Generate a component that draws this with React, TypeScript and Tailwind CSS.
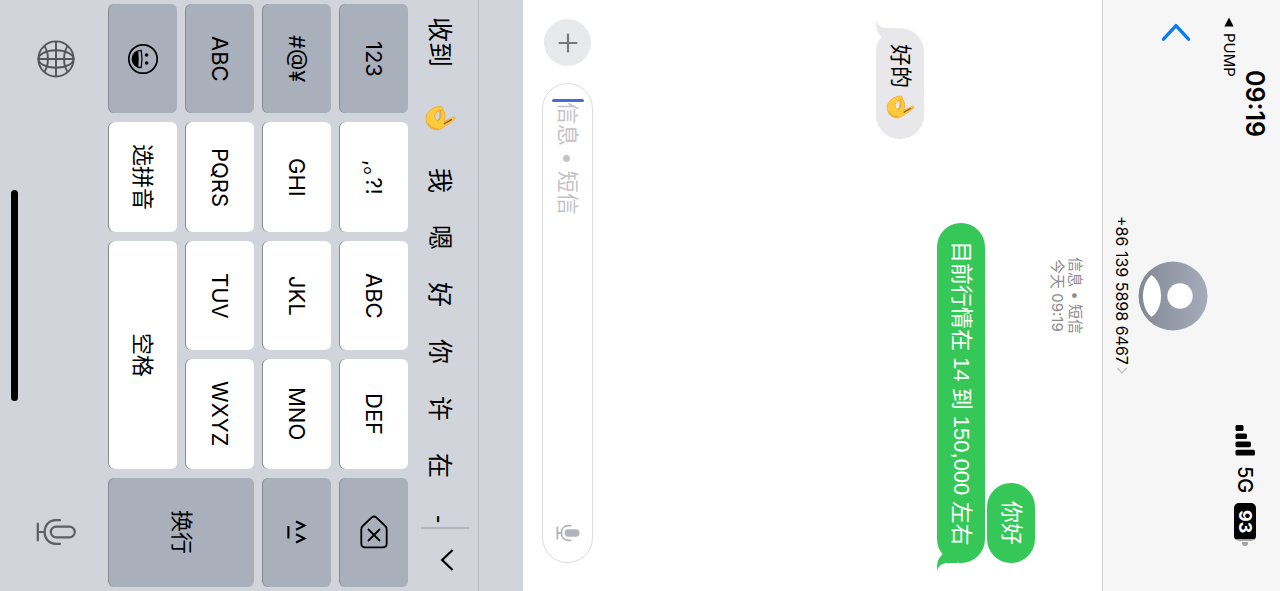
import type { ReactNode } from "react";

const latin = "font-['Inter','Noto_Sans_CJK_SC',sans-serif]";
const cjk = "font-['Liberation_Sans','Noto_Sans_CJK_SC',sans-serif]";

function OkHand({ className }: { className: string }) {
  return (
    <svg viewBox="0 0 31 26" className={className} role="img" aria-label="👌">
      <path
        fillRule="evenodd"
        fill="#ffcb3d"
        stroke="#e8a02c"
        strokeWidth="0.7"
        d="M15.6 1.2 C17.4 1.4 18 3 17.8 4.6 C19.8 7 20.4 10 19.8 13 L19.2 16.6 L28.2 12.2 C30.4 11.6 30.8 13.6 29 14.8 L23.4 19 L16.6 23.4 C14 25.6 9.6 25.2 6.4 23.4 C2.4 20.8 0.6 16.4 1.2 12.2 C2 6.6 8 1.4 15.6 1.2 Z M14.2 5.4 C11 7 9.4 9.6 9.8 12.4 C10.2 14.6 11.6 15.6 12.8 15.4 C14.8 13.4 15.6 9.4 14.2 5.4 Z"
      />
      <path d="M15 4.6 C16.8 8.6 16 13.4 13 16.4 M17.6 4.6 C16.8 5.4 16 5.4 15.2 5" fill="none" stroke="#e39a26" strokeWidth="0.9" />
      <path d="M19.4 18.6 L26.4 14.6" fill="none" stroke="#9a5d16" strokeWidth="1.5" strokeLinecap="round" />
      <path d="M3 18 C5 22 9 24 13.4 23.4" fill="none" stroke="#f0a830" strokeWidth="1.2" />
    </svg>
  );
}

function Avatar() {
  return (
    <svg viewBox="0 0 70 70" className="h-[70px] w-[70px]" aria-hidden="true">
      <defs>
        <linearGradient id="avatar" x1="0" y1="0" x2="1" y2="0">
          <stop offset="0" stopColor="#848995" />
          <stop offset="1" stopColor="#a5abba" />
        </linearGradient>
      </defs>
      <circle cx="35" cy="35" r="34.5" fill="url(#avatar)" />
      <circle cx="42" cy="35" r="12.7" fill="#fff" />
      <path d="M13.5 14 C19 18 23 25 23 35 C23 45 19 52 13.5 56 C8 51 5 44 5 35 C5 26 8 19 13.5 14 Z" fill="#fff" />
    </svg>
  );
}

function StatusBar() {
  return (
    <div className="flex w-16 justify-between">
      <div className="flex flex-col ps-[17px] [padding-block-start:12px]">
        <time className="w-[26px] ps-[53px] text-[25px] leading-[26px] font-semibold">09:19</time>
        <a href="#pump" className="flex w-[26px] items-center gap-1.5 text-[15px] leading-[26px]">
          <svg viewBox="0 0 10 10" className="h-2.5 w-2.5" aria-hidden="true">
            <path d="M5 0.5 L9.6 9.5 L0.4 9.5 Z" />
          </svg>
          PUMP
        </a>
      </div>
      <div className="flex w-[22px] items-center gap-[10px] pe-[45px] text-[20px] leading-[22px] font-medium [margin-block-start:24px]">
        <svg viewBox="0 0 20 31" className="h-[31px] w-5" role="img" aria-label="Signal">
          <rect x="0.5" y="0" width="8" height="6" rx="1.6" />
          <rect x="0.5" y="8.4" width="11.5" height="5.6" rx="1.6" />
          <rect x="0.5" y="16.6" width="15.5" height="5.6" rx="1.6" />
          <rect x="0.5" y="24.8" width="19.5" height="5.8" rx="1.6" />
        </svg>
        <span>5G</span>
        <span className="flex items-center">
          <span className="flex h-[38px] w-[22px] items-center justify-center rounded-[5px] bg-linear-to-b from-black from-95% to-[#a3a3a3] to-95% text-[18px] font-bold text-white">
            93
          </span>
          <span className="mt-px h-1 w-1.5 rounded-b-full bg-[#a3a3a3]" />
        </span>
      </div>
    </div>
  );
}

function Header() {
  return (
    <header className={`flex w-[178px] shrink-0 flex-col border-l border-[#cfcfd1] bg-[#f6f6f6] text-black ${latin}`}>
      <StatusBar />
      <nav className="grid flex-1 grid-cols-3">
        <button type="button" aria-label="Back" className="flex w-8 justify-start ps-[22px] [margin-block-start:24px]">
          <svg viewBox="0 0 32 20" className="h-5 w-8" aria-hidden="true">
            <path d="M3.5 17.2 L16 3.6 L28.5 17.2" fill="none" stroke="#0b7cf5" strokeWidth="3.4" strokeLinecap="round" strokeLinejoin="round" />
          </svg>
        </button>
        <a href="#contact" className="flex flex-col items-center gap-1.5 [padding-block-start:8px]">
          <Avatar />
          <span className="flex items-center gap-0.5 text-[16px] leading-[20px] whitespace-nowrap">
            +86 139 5898 6467
            <svg viewBox="0 0 12 8" className="h-2 w-3" aria-hidden="true">
              <path d="M1.5 1.2 L6 6 L10.5 1.2" fill="none" stroke="#c2c2c5" strokeWidth="1.4" strokeLinecap="round" />
            </svg>
          </span>
        </a>
      </nav>
    </header>
  );
}

function SentBubble({ children, tail }: { children: ReactNode; tail?: boolean }) {
  return (
    <div className="relative me-7 flex w-12 items-center self-end rounded-full bg-[#36c759] px-[18px] text-[22px] leading-[28px] whitespace-nowrap text-white">
      {children}
      {tail && (
        <svg viewBox="0 0 20 24" className="absolute -bottom-2 left-0 h-6 w-5" aria-hidden="true">
          <path d="M20 16 H11 C6 16 1.5 18 0.3 24 C-0.5 16 1 11 6 7 L14 1 H20 Z" fill="#36c759" />
        </svg>
      )}
    </div>
  );
}

function Conversation() {
  return (
    <section className={`flex flex-1 flex-col ${cjk}`} aria-label="Messages">
      <div className={`self-center text-center text-[15px] leading-[18px] text-[#8a8a8e] [padding-block:18px_13px] ${latin}`}>
        <p>信息 • 短信</p>
        <p>今天 09:19</p>
      </div>
      <div className="flex flex-col gap-0.5">
        <SentBubble>你好</SentBubble>
        <SentBubble tail>目前行情在 14 到 150,000 左右</SentBubble>
      </div>
      <div className="relative ms-7 flex w-12 items-center gap-[7px] self-start rounded-full bg-[#e8e8ea] ps-4 pe-5 text-[22px] leading-[28px] text-black [margin-block-start:13px]">
        好的
        <OkHand className="h-6 w-[29px]" />
        <svg viewBox="0 0 20 24" className="absolute -top-2 left-0 h-6 w-5" aria-hidden="true">
          <path d="M20 8 H11 C6 8 1.5 6 0.3 0 C-0.5 8 1 13 6 17 H12 L20 10 Z" fill="#e8e8ea" />
        </svg>
      </div>
    </section>
  );
}

function Composer() {
  return (
    <form className={`flex w-[80px] shrink-0 items-center gap-[17px] pe-7 ps-[19px] [padding-block-start:10px] [padding-block-end:19px] ${latin}`}>
      <button type="button" aria-label="Add" className="flex h-[47px] w-[47px] shrink-0 items-center justify-center rounded-full bg-[#e8e9eb]">
        <svg viewBox="0 0 20 20" className="h-5 w-5" aria-hidden="true">
          <path d="M10 1.5 V18.5 M1.5 10 H18.5" stroke="#77787c" strokeWidth="2.2" strokeLinecap="round" />
        </svg>
      </button>
      <div className="flex min-h-0 w-[51px] flex-1 items-center rounded-full border border-[#dcdcde] pe-5 ps-[15px]">
        <span className="h-[3px] w-8 rounded-full bg-[#4a6ad6]" />
        <input
          type="text"
          aria-label="Message"
          placeholder="信息 • 短信"
          className="min-h-0 w-8 flex-1 text-[22px] leading-[32px] outline-none placeholder:text-[#c3c3c6]"
        />
        <button type="button" aria-label="Dictate">
          <svg viewBox="0 0 24 18" className="h-[18px] w-6" aria-hidden="true">
            <rect x="8.5" y="5.3" width="15" height="7.4" rx="3.7" fill="#b1b4bb" />
            <path d="M1.4 3.5 V14.5 M1.4 9 H5.4 M14.6 1.7 H12.5 C8 1.7 5.4 5 5.4 9 C5.4 13 8 16.3 12.5 16.3 H14.6" fill="none" stroke="#b1b4bb" strokeWidth="1.8" strokeLinecap="round" />
          </svg>
        </button>
      </div>
    </form>
  );
}

function Candidates() {
  return (
    <div className={`flex w-[70px] text-[25px] leading-[30px] ${cjk}`}>
      <div className="flex min-h-0 flex-1 items-center overflow-hidden [padding-block-start:6px]">
        <button type="button" className="h-[84px] w-8 shrink-0">收到</button>
        <button type="button" className="flex h-[68px] w-8 shrink-0 items-center justify-center">
          <OkHand className="h-[26px] w-[31px]" />
        </button>
        {["我", "嗯", "好", "你", "许", "在"].map((word) => (
          <button type="button" key={word} className="h-[57px] w-8 shrink-0">
            {word}
          </button>
        ))}
        <button type="button" className="w-8 shrink-0 ps-[21px]">-</button>
      </div>
      <button
        type="button"
        aria-label="More candidates"
        className="flex h-16 w-12 items-center justify-center self-start border-t-2 border-[#b4b6bb] [margin-block-start:9px] [padding-block-end:3px]"
      >
        <svg viewBox="0 0 14 24" className="h-6 w-3.5" aria-hidden="true">
          <path d="M12.6 2 L2.2 12 L12.6 22" fill="none" stroke="#000" strokeWidth="2.2" />
        </svg>
      </button>
    </div>
  );
}

function Key({ children, dark, label, className = "" }: { children: ReactNode; dark?: boolean; label?: string; className?: string }) {
  return (
    <button
      type="button"
      aria-label={label}
      className={`flex min-h-0 min-w-0 items-center justify-center rounded-md shadow-[-1px_0_0_#898b90] ${dark ? "bg-[#a9afbb]" : "bg-white"} ${className}`}
    >
      {children}
    </button>
  );
}

function Keypad() {
  return (
    <div className={`grid w-[299px] grid-cols-5 grid-rows-4 gap-[9px] ps-1 pe-1 text-[22px] leading-[28px] ${latin}`}>
      <Key dark>123</Key>
      <Key className="[font-feature-settings:'halt']">,。?!</Key>
      <Key>ABC</Key>
      <Key>DEF</Key>
      <Key dark label="Delete">
        <svg viewBox="0 0 28 34" className="h-[34px] w-7" aria-hidden="true">
          <path d="M11.5 2.6 Q14 0.4 16.5 2.6 L25.3 11 Q26.7 12.4 26.7 14.4 V28.5 Q26.7 32.4 22.8 32.4 H5.2 Q1.3 32.4 1.3 28.5 V14.4 Q1.3 12.4 2.7 11 Z M8 14 L20 26 M20 14 L8 26" fill="none" stroke="#000" strokeWidth="1.8" />
        </svg>
      </Key>
      <Key dark>#@¥</Key>
      <Key>GHI</Key>
      <Key>JKL</Key>
      <Key>MNO</Key>
      <Key dark label="Emoticons">
        <svg viewBox="0 0 20 24" className="h-6 w-5" aria-hidden="true">
          <path d="M9 1.5 L17.5 5.6 L9 9.7 M9 14.3 L17.5 18.4 L9 22.5 M1.4 6 V18.5" fill="none" stroke="#000" strokeWidth="2.1" />
        </svg>
      </Key>
      <Key dark>ABC</Key>
      <Key>PQRS</Key>
      <Key>TUV</Key>
      <Key>WXYZ</Key>
      <Key dark className="row-span-2">换行</Key>
      <Key dark label="Emoji">
        <svg viewBox="0 0 32 32" className="h-8 w-8" aria-hidden="true">
          <circle cx="16" cy="16" r="14.2" fill="none" stroke="#000" strokeWidth="1.7" />
          <circle cx="19.6" cy="12" r="1.8" />
          <circle cx="19.6" cy="20" r="1.8" />
          <path d="M14.2 7.4 C8.5 7.4 5.2 11.5 5.2 16 C5.2 20.5 8.5 24.6 14.2 24.6 C15.2 19 15.2 13 14.2 7.4 Z" fill="none" stroke="#000" strokeWidth="1.2" />
          <path d="M11.2 8 C7.4 9.4 5.4 12.6 5.4 16 C5.4 19.4 7.4 22.6 11.2 24 C11.9 19 11.9 13 11.2 8 Z" />
        </svg>
      </Key>
      <Key>选拼音</Key>
      <Key className="col-span-2">空格</Key>
    </div>
  );
}

function Keyboard() {
  return (
    <section className="flex w-[523px] shrink-0 flex-col bg-[#d1d4db] text-black" aria-label="Keyboard">
      <div className="w-[45px] border-l border-[#b9bbc0]" />
      <Candidates />
      <Keypad />
      <div className="flex w-[80px] items-center justify-between ps-10 pe-[45px] [padding-block-start:26px]">
        <button type="button" aria-label="Next keyboard">
          <svg viewBox="0 0 38 38" className="h-[38px] w-[38px]" fill="none" stroke="#53565e" strokeWidth="1.9" aria-hidden="true">
            <circle cx="19" cy="19" r="17.6" />
            <ellipse cx="19" cy="19" rx="17.6" ry="8.8" />
            <path d="M1.2 19 H36.8 M19 1.2 V36.8 M7.2 5.8 C12.2 13 12.2 25 7.2 32.2 M30.8 5.8 C25.8 13 25.8 25 30.8 32.2" />
          </svg>
        </button>
        <button type="button" aria-label="Dictation">
          <svg viewBox="0 0 40 28" className="h-7 w-10" fill="none" stroke="#5b5e66" strokeWidth="2.2" strokeLinecap="round" aria-hidden="true">
            <rect x="14.8" y="8.6" width="24" height="10.8" rx="5.4" />
            <path d="M1.8 5.5 V22.5 M1.8 14 H8.6 M24 2.2 H20 C12.6 2.2 8.6 7.6 8.6 14 C8.6 20.4 12.6 25.8 20 25.8 H24" />
          </svg>
        </button>
      </div>
      <div className="flex w-[29px] flex-col items-center justify-center">
        <div className="h-[211px] w-[7px] rounded-full bg-black" />
      </div>
    </section>
  );
}

export default function App() {
  return (
    <div className="flex h-screen w-full flex-col overflow-hidden bg-white [text-orientation:sideways] [writing-mode:vertical-rl]">
      <Header />
      <main className="flex min-w-0 flex-1 flex-col">
        <Conversation />
        <Composer />
      </main>
      <Keyboard />
    </div>
  );
}
